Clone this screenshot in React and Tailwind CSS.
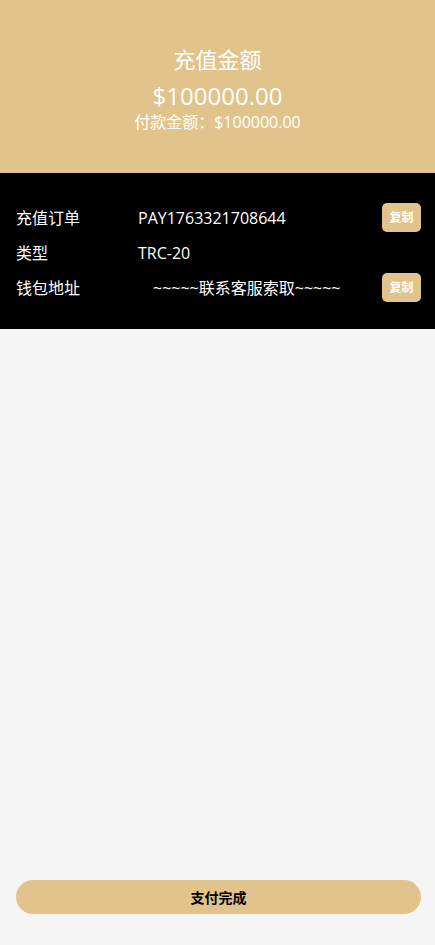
import React from 'react';

const font = { fontFamily: '"Open Sans", "Noto Sans CJK SC", sans-serif' };

const Row = ({ label, value, copy, center }) => (
  <div className="flex items-center h-[35px]">
    <div className="w-[122px] shrink-0 text-white text-[16px]">{label}</div>
    <div className={`flex-1 text-white text-[16px] ${center ? 'pl-[15px]' : ''}`}>{value}</div>
    {copy && (
      <button className="w-[39px] h-[29px] rounded-[5px] bg-[#e1c48c] text-white text-[12px] font-bold">
        复制
      </button>
    )}
  </div>
);

export default function App() {
  return (
    <div className="min-h-[945px] bg-[#f5f5f5] flex flex-col" style={font}>
      <header className="bg-[#e1c48c] h-[173px] flex flex-col items-center pt-[44px] text-white">
        <h1 className="text-[22px] leading-[30px]">充值金额</h1>
        <div className="text-[24px] leading-[24px] mt-[10px]">$100000.00</div>
        <div className="text-[16px] leading-[18px] mt-[5px]">付款金额：$100000.00</div>
      </header>

      <section className="bg-black h-[156px] pl-4 pr-[14px] pt-[27px] flex flex-col">
        <Row label="充值订单" value="PAY1763321708644" copy />
        <Row label="类型" value="TRC-20" />
        <Row label="钱包地址" value="~~~~~联系客服索取~~~~~" copy center />
      </section>

      <div className="flex-1" />

      <div className="pl-4 pr-[14px] pb-[31px]">
        <button className="w-full h-[34px] rounded-full bg-[#e1c48c] text-black text-[14px] font-bold">
          支付完成
        </button>
      </div>
    </div>
  );
}
